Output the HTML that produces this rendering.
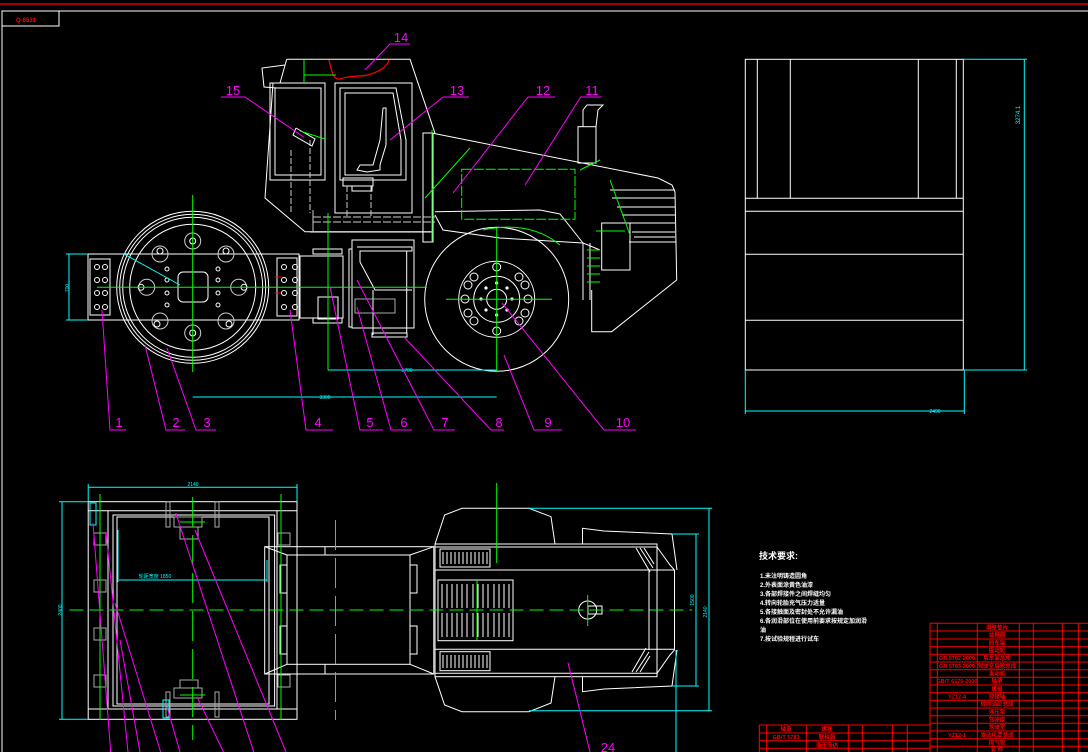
<!DOCTYPE html>
<html><head><meta charset="utf-8"><style>
html,body{margin:0;padding:0;background:#000;}
svg{display:block;}
text{font-family:"Liberation Sans","Noto Sans CJK SC",sans-serif;}
</style></head><body>
<svg width="1088" height="752" viewBox="0 0 1088 752" xmlns="http://www.w3.org/2000/svg">
<rect width="1088" height="752" fill="#000"/>
<!-- border -->
<line x1="0" y1="4" x2="1088" y2="4" stroke="#f00" stroke-width="1.2"/>
<line x1="2" y1="11" x2="1088" y2="11" stroke="#fff"/>
<line x1="2" y1="11" x2="2" y2="752" stroke="#fff"/>
<rect x="2" y="11" width="57" height="15" fill="none" stroke="#fff"/>
<text x="26" y="22" fill="#f00" font-size="6" text-anchor="middle" font-weight="bold">Q-8531</text>

<!-- ===== SIDE VIEW ===== -->
<g fill="none" stroke="#fff" stroke-width="1">
<!-- cab -->
<polyline points="286.7,59.3 410,59.3 435,133.3"/>
<polyline points="286.7,59.3 280,83 273,83 265,198 305,231.7 433,231.7"/>
<polyline points="285,65 262,68 264,87 277,88"/>
<rect x="270" y="83" width="55" height="97"/>
<rect x="275" y="88" width="46" height="87"/>
<rect x="335" y="83" width="77" height="130"/>
<polygon points="340,88 396,88 406,140 406,180 340,180"/>
<polygon points="345,93 393,93 401,140 401,175 345,175"/>
<polyline points="383,108 386,108 386,145 380,165 380,170 367,172 357,170 360,165 373,165 380,140 383,108"/>
<rect x="343" y="178" width="30" height="8"/>
<rect x="352" y="186" width="20" height="5"/>
<line x1="313" y1="217" x2="435" y2="217" stroke="#ccc" stroke-dasharray="8,2"/>
<line x1="313" y1="222" x2="435" y2="222" stroke="#ccc" stroke-dasharray="8,2"/>
<line x1="310" y1="232" x2="433" y2="232"/>
<line x1="313" y1="210" x2="313" y2="232" stroke="#ccc"/>
<line x1="291" y1="150" x2="291" y2="213" stroke="#ccc" stroke-dasharray="6,2"/>
<line x1="310" y1="140" x2="310" y2="213" stroke="#ccc" stroke-dasharray="6,2"/>
<line x1="347" y1="186" x2="347" y2="217" stroke="#ccc" stroke-dasharray="6,2"/>
<line x1="371" y1="186" x2="371" y2="217" stroke="#ccc" stroke-dasharray="6,2"/>
<polyline points="296,128 315,139 312,146 293,135 296,128"/>
<!-- post -->
<rect x="423" y="133" width="10" height="109"/>
<!-- hood -->
<polyline points="433,133.3 658,178 672,185 675,192 676.7,280 611.7,331.7 591.7,331.7 591.7,290"/>
<polyline points="435,211.7 540,210 560,214 583,243 600,250"/>
<polyline points="435,215 443,230 500,238 583,243"/>
<rect x="578" y="126.7" width="18" height="36.3"/>
<polyline points="583,126.7 583,110 587,105 603,105 598,110 596,126.7"/>
<rect x="601.7" y="223" width="28.3" height="47"/>
<line x1="610" y1="190" x2="675" y2="190"/>
<line x1="612" y1="198" x2="675" y2="198"/>
<line x1="617" y1="207" x2="675" y2="207"/>
<line x1="622" y1="215" x2="675" y2="215"/>
<line x1="626" y1="223" x2="675" y2="223"/>
<line x1="632" y1="232" x2="675" y2="232"/>
<line x1="634" y1="237" x2="675" y2="237"/>
<line x1="629" y1="242" x2="676" y2="242"/>
<line x1="583" y1="243" x2="583" y2="300"/>
<line x1="590" y1="243" x2="590" y2="300"/>
<!-- rear wheel -->
<circle cx="496.7" cy="299.3" r="72"/>
<circle cx="496.7" cy="299.3" r="38"/>
<circle cx="496.7" cy="299.3" r="23"/>
<circle cx="496.7" cy="299.3" r="10"/>
<!-- front drum -->
<circle cx="192.7" cy="287.3" r="76"/>
<circle cx="192.7" cy="287.3" r="73"/>
<circle cx="192.7" cy="287.3" r="70"/>
<circle cx="192.7" cy="287.3" r="63"/>
<rect x="88" y="254" width="211" height="66"/>
<rect x="178" y="272" width="30" height="30" rx="5"/>
<rect x="90" y="259" width="20" height="56"/>
<rect x="277" y="258" width="20" height="58"/>
<!-- middle frame -->
<rect x="300" y="256" width="43" height="62"/>
<rect x="313" y="249" width="29" height="5"/>
<rect x="313" y="318" width="29" height="5"/>
<rect x="349" y="249" width="3" height="78"/>
<rect x="352" y="240" width="62" height="88"/>
<polyline points="357,247 412,247 412,251 360,251 360,262 375,290 412,290"/>
<line x1="406.7" y1="251" x2="406.7" y2="333"/>
<line x1="373" y1="290" x2="373" y2="335"/>
<rect x="372" y="333" width="35" height="4"/>
<rect x="355" y="299" width="40" height="14" stroke="#aaa"/>
<rect x="318" y="297" width="20" height="22"/>
</g>
<!-- drum bolts -->
<g fill="none" stroke="#ccc">
<circle cx="192.7" cy="241" r="8"/><circle cx="192.7" cy="333" r="8"/>
<circle cx="146.7" cy="287.3" r="8"/><circle cx="238.7" cy="287.3" r="8"/>
<circle cx="160" cy="254" r="8"/><circle cx="226" cy="254" r="8"/>
<circle cx="160" cy="321" r="8"/><circle cx="226" cy="321" r="8"/>
</g>
<g fill="none" stroke="#fff">
<circle cx="192.7" cy="241" r="3"/><circle cx="192.7" cy="333" r="3"/>
<circle cx="141" cy="287.3" r="3"/><circle cx="244" cy="287.3" r="3"/>
<circle cx="160" cy="251" r="3"/><circle cx="226" cy="251" r="3"/>
<circle cx="157" cy="324" r="3"/><circle cx="229" cy="324" r="3"/>
<circle cx="167" cy="269" r="2"/><circle cx="167" cy="280" r="2"/><circle cx="167" cy="293" r="2"/><circle cx="167" cy="305" r="2"/>
<circle cx="218" cy="269" r="2"/><circle cx="218" cy="280" r="2"/><circle cx="218" cy="293" r="2"/><circle cx="218" cy="305" r="2"/>
<circle cx="97" cy="267" r="2.5"/><circle cx="105" cy="267" r="2.5"/><circle cx="97" cy="280" r="2.5"/><circle cx="105" cy="280" r="2.5"/>
<circle cx="97" cy="293" r="2.5"/><circle cx="105" cy="293" r="2.5"/><circle cx="97" cy="307" r="2.5"/><circle cx="105" cy="307" r="2.5"/>
<circle cx="284" cy="267" r="2.5"/><circle cx="295" cy="267" r="2.5"/><circle cx="284" cy="280" r="2.5"/><circle cx="295" cy="280" r="2.5"/>
<circle cx="284" cy="293" r="2.5"/><circle cx="295" cy="293" r="2.5"/><circle cx="284" cy="307" r="2.5"/><circle cx="295" cy="307" r="2.5"/>
</g>
<!-- wheel bolts -->
<g fill="none" stroke="#fff">
<circle cx="496.7" cy="267" r="4"/><circle cx="496.7" cy="331" r="4"/>
<circle cx="465" cy="299" r="4"/><circle cx="528" cy="299" r="4"/>
<circle cx="474" cy="277" r="4"/><circle cx="519" cy="277" r="4"/>
<circle cx="474" cy="321" r="4"/><circle cx="519" cy="321" r="4"/>
<circle cx="468" cy="285" r="4"/><circle cx="525" cy="285" r="4"/>
<circle cx="468" cy="313" r="4"/><circle cx="525" cy="313" r="4"/>
</g>
<g fill="#fff">
<circle cx="496.7" cy="283" r="1.6"/><circle cx="496.7" cy="315" r="1.6"/><circle cx="481" cy="299" r="1.6"/><circle cx="512" cy="299" r="1.6"/>
<circle cx="486" cy="288" r="1.6"/><circle cx="507" cy="288" r="1.6"/><circle cx="486" cy="310" r="1.6"/><circle cx="507" cy="310" r="1.6"/>
</g>
<!-- red details -->
<path d="M329,60 C332,72 333,80 340,79 C350,75 360,77 368,75 C378,72 387,67 389,60" fill="none" stroke="#f00" stroke-width="1.2"/>
<line x1="275" y1="277" x2="281" y2="277" stroke="#f00"/><line x1="275" y1="293" x2="281" y2="293" stroke="#f00"/>
<!-- green centerlines -->
<g stroke="#0f0" stroke-width="1" fill="none">
<line x1="192.7" y1="195" x2="192.7" y2="372"/>
<line x1="97" y1="287.3" x2="300" y2="287.3"/>
<line x1="496.7" y1="228" x2="496.7" y2="372"/>
<line x1="446" y1="299.3" x2="552" y2="299.3"/>
<line x1="328" y1="213" x2="328" y2="370"/>
<line x1="300" y1="287.3" x2="420" y2="287.3"/>
<line x1="420" y1="287.3" x2="427" y2="287.3"/>
<rect x="461.7" y="169.3" width="113.3" height="50" stroke-dasharray="10,2"/>
<line x1="304" y1="75" x2="336" y2="75"/>
<line x1="304" y1="60" x2="304" y2="83"/>
<path d="M483,230 Q530,220 560,245" />
<line x1="425" y1="198" x2="470" y2="148"/>
<line x1="432" y1="130" x2="432" y2="242"/>
<line x1="300" y1="131" x2="325" y2="139"/>
<line x1="596" y1="231" x2="625" y2="231"/>
<line x1="580" y1="170" x2="600" y2="160"/>
<line x1="610" y1="180" x2="630" y2="235"/>
<line x1="587" y1="250" x2="600" y2="250"/><line x1="587" y1="258" x2="600" y2="258"/><line x1="587" y1="266" x2="600" y2="266"/><line x1="587" y1="274" x2="600" y2="274"/><line x1="587" y1="282" x2="600" y2="282"/>
</g>
<!-- cyan dims side -->
<g stroke="#0ff" fill="none">
<line x1="69" y1="254" x2="69" y2="320"/>
<line x1="66" y1="254" x2="88" y2="254"/><line x1="66" y1="320" x2="88" y2="320"/>
<line x1="328" y1="370" x2="496.7" y2="370"/>
<line x1="192.7" y1="397" x2="496.7" y2="397"/>
<line x1="124" y1="254" x2="180" y2="285"/>
</g>
<text x="407" y="372" fill="#0ff" font-size="5" text-anchor="middle">1700</text>
<text x="325" y="399" fill="#0ff" font-size="5" text-anchor="middle">3300</text>
<text x="67" y="290" fill="#0ff" font-size="5" text-anchor="middle" transform="rotate(-90 67 288)">700</text>

<!-- magenta labels & leaders -->
<g stroke="#f0f" fill="none">
<polyline points="410,44 390,44 365,70"/>
<polyline points="469,97 443,97 390,140"/>
<polyline points="555,97 528,97 453,193"/>
<polyline points="601.7,97 580.7,97 525,185"/>
<polyline points="221,97 245,97 303.6,137" />
<polyline points="126,430 110,430 102,310"/>
<polyline points="185,430 166,430 145,345"/>
<polyline points="216,430 196,430 167,348"/>
<polyline points="333,430 306,430 290,310"/>
<polyline points="383,430 360,430 330,287"/>
<polyline points="412,430 391,430 357,307"/>
<polyline points="455,430 434,430 357,280"/>
<polyline points="504,430 491,430 404,337"/>
<polyline points="562,430 534,430 504,355"/>
<polyline points="636,430 604,430 502,303"/>
</g>
<g fill="#f0f" font-size="13" text-anchor="middle" font-family="Liberation Serif,serif">
<text x="401" y="42">14</text><text x="457" y="95">13</text><text x="543" y="95">12</text><text x="592" y="95">11</text><text x="233" y="95">15</text>
<text x="119" y="427">1</text><text x="176" y="427">2</text><text x="207" y="427">3</text><text x="318" y="427">4</text><text x="370" y="427">5</text>
<text x="404" y="427">6</text><text x="445" y="427">7</text><text x="499" y="427">8</text><text x="548" y="427">9</text><text x="623" y="427">10</text>
<text x="608" y="752">24</text>
</g>

<!-- ===== FRONT VIEW (right) ===== -->
<g fill="none" stroke="#fff">
<rect x="745.3" y="59.3" width="218" height="310.7"/>
<line x1="757.3" y1="59.3" x2="757.3" y2="198.3"/>
<line x1="790.3" y1="59.3" x2="790.3" y2="198.3"/>
<line x1="918.3" y1="59.3" x2="918.3" y2="198.3"/>
<line x1="956.3" y1="59.3" x2="956.3" y2="198.3"/>
<line x1="745.3" y1="198.3" x2="963.3" y2="198.3"/>
<line x1="745.3" y1="211.3" x2="963.3" y2="211.3"/>
<line x1="745.3" y1="254.3" x2="963.3" y2="254.3"/>
<line x1="745.3" y1="320.3" x2="963.3" y2="320.3"/>
</g>
<g stroke="#0ff" fill="none">
<line x1="963.3" y1="59.3" x2="1027" y2="59.3"/>
<line x1="963.3" y1="370" x2="1027" y2="370"/>
<line x1="1024.3" y1="59.3" x2="1024.3" y2="370"/>
<line x1="745.3" y1="370" x2="745.3" y2="414"/>
<line x1="964.3" y1="370" x2="964.3" y2="414"/>
<line x1="745.3" y1="411" x2="964.3" y2="411"/>
</g>
<text x="1020" y="115" fill="#0ff" font-size="6" text-anchor="middle" transform="rotate(-90 1020 115)">3274.1</text>
<text x="935" y="413" fill="#0ff" font-size="5" text-anchor="middle">2490</text>

<!-- ===== PLAN VIEW ===== -->
<g fill="none" stroke="#fff">
<rect x="88.2" y="501.7" width="208.8" height="217.6"/>
<line x1="88.2" y1="510.7" x2="297" y2="510.7"/>
<line x1="88.2" y1="709" x2="297" y2="709"/>
<line x1="108" y1="510.7" x2="108" y2="709"/>
<line x1="277" y1="510.7" x2="277" y2="709"/>
<rect x="113" y="515" width="161.6" height="191"/>
<rect x="117" y="517" width="152" height="187"/>
<rect x="264.7" y="546.7" width="169.1" height="127.3"/>
<rect x="287" y="555" width="123" height="109.3"/>
<line x1="264.7" y1="546.7" x2="287" y2="555"/><line x1="433.8" y1="546.7" x2="410" y2="555"/>
<line x1="264.7" y1="674" x2="287" y2="664.3"/><line x1="433.8" y1="674" x2="410" y2="664.3"/>
<rect x="280" y="565" width="7" height="28"/><rect x="280" y="626" width="7" height="28"/>
<rect x="410" y="565" width="7" height="28"/><rect x="410" y="626" width="7" height="28"/>
<line x1="325" y1="546.7" x2="325" y2="555"/><line x1="325" y1="664.3" x2="325" y2="674"/>
<rect x="435" y="544" width="222" height="132.7"/>
<line x1="435" y1="547" x2="657" y2="547"/>
<line x1="435" y1="570" x2="674.5" y2="570"/>
<line x1="435" y1="649.3" x2="674.5" y2="649.3"/>
<line x1="435" y1="673.3" x2="657" y2="673.3"/>
<line x1="674.5" y1="570" x2="674.5" y2="650"/>
<line x1="649" y1="570" x2="649" y2="650"/>
<polyline points="657,547 670,565 674.5,570"/><polyline points="657,673.3 670,655 674.5,650"/>
<polyline points="435,544 444.6,515 462,508.3 529,508.3 551,516.7 555,544"/>
<polyline points="435,676.7 444.6,705 462,711.7 529,711.7 551,703 555,676.7"/>
<polyline points="582.5,544 582.5,528.3 604,531 672,534 677,570"/>
<polyline points="582.5,676.7 582.5,691.7 604,689 672,686 677,650"/>
<rect x="440" y="549" width="50" height="18"/>
<rect x="440" y="651.7" width="50" height="19"/>
<rect x="438" y="580" width="75" height="60.7"/>
<circle cx="587.7" cy="610" r="9"/>
<rect x="588" y="606" width="14" height="8"/>
</g>
<!-- vent slats -->
<g stroke="#fff" fill="none">
<path d="M443,552v12M447,552v12M451,552v12M455,552v12M459,552v12M463,552v12M467,552v12M471,552v12M475,552v12M479,552v12M483,552v12M487,552v12"/>
<path d="M443,655v13M447,655v13M451,655v13M455,655v13M459,655v13M463,655v13M467,655v13M471,655v13M475,655v13M479,655v13M483,655v13M487,655v13"/>
<path d="M442,584v24M447,584v24M452,584v24M457,584v24M462,584v24M467,584v24M473,584v24M478,584v24M483,584v24M488,584v24M494,584v24M499,584v24M504,584v24M509,584v24"/>
<path d="M442,613v24M447,613v24M452,613v24M457,613v24M462,613v24M467,613v24M473,613v24M478,613v24M483,613v24M488,613v24M494,613v24M499,613v24M504,613v24M509,613v24"/>
<path d="M636,548l14,24M640,548l13,20M644,548l10,16M632,672l14,-24M636,672l13,-20M640,672l10,-16"/>
</g>
<!-- grey details plan -->
<g stroke="#aaa" fill="none">
<rect x="174" y="517" width="28" height="10"/><rect x="180" y="527" width="18" height="12"/>
<rect x="174" y="688" width="28" height="10"/><rect x="180" y="680" width="18" height="8"/>
<rect x="166" y="502" width="4" height="25"/><rect x="215" y="502" width="4" height="25"/>
<rect x="166" y="692" width="4" height="25"/><rect x="215" y="692" width="4" height="25"/>
<rect x="94" y="533" width="12" height="12"/><rect x="94" y="580" width="12" height="12"/>
<rect x="94" y="628" width="12" height="12"/><rect x="94" y="675" width="12" height="12"/>
<rect x="278" y="533" width="12" height="12"/><rect x="278" y="675" width="12" height="12"/>
</g>
<g stroke="#0f0" fill="none">
<line x1="69.5" y1="610" x2="692" y2="610" stroke-dasharray="14,6"/>
<line x1="192.7" y1="497" x2="192.7" y2="740" stroke-dasharray="30,8"/>
<line x1="335.5" y1="520" x2="335.5" y2="720" stroke-dasharray="30,8"/>
<line x1="496.7" y1="483" x2="496.7" y2="563"/>
<line x1="587.7" y1="595" x2="587.7" y2="626"/>
<line x1="100" y1="494" x2="100" y2="720"/>
<line x1="281" y1="494" x2="281" y2="720"/>
<line x1="180" y1="522" x2="205" y2="522"/><line x1="180" y1="695" x2="205" y2="695"/>
<line x1="477" y1="580" x2="477" y2="640"/>
</g>
<!-- cyan dims plan -->
<g stroke="#0ff" fill="none">
<line x1="88.2" y1="487.3" x2="297" y2="487.3"/>
<line x1="88.2" y1="484" x2="88.2" y2="501"/><line x1="297" y1="484" x2="297" y2="501"/>
<line x1="62" y1="501.7" x2="62" y2="719.3"/>
<line x1="59" y1="501.7" x2="88" y2="501.7"/><line x1="59" y1="719.3" x2="88" y2="719.3"/>
<line x1="119" y1="580" x2="267" y2="580"/>
<line x1="118" y1="530" x2="118" y2="582"/><line x1="267" y1="560" x2="267" y2="582"/>
<line x1="696" y1="534" x2="696" y2="686"/>
<line x1="672" y1="534" x2="699" y2="534"/><line x1="672" y1="686" x2="699" y2="686"/>
<line x1="709" y1="508.3" x2="709" y2="710.7"/>
<line x1="529" y1="508.3" x2="712" y2="508.3"/><line x1="529" y1="710.7" x2="712" y2="710.7"/>
<line x1="676" y1="650" x2="676" y2="752"/>
<rect x="90" y="503" width="6" height="22"/>
<rect x="163" y="700" width="6" height="18"/>
</g>
<g fill="#0ff" font-size="5" text-anchor="middle">
<text x="193" y="486">2140</text>
<text x="155" y="578">轮距宽度 1850</text>
<text x="60" y="612" transform="rotate(-90 60 610)">2400</text>
<text x="694" y="600" transform="rotate(-90 694 600)">1500</text>
<text x="707" y="612" transform="rotate(-90 707 612)">2140</text>
</g>
<g stroke="#f0f" fill="none">
<line x1="93" y1="523" x2="110.7" y2="752"/>
<line x1="106" y1="531.7" x2="128" y2="752"/>
<line x1="115" y1="603" x2="160.6" y2="752"/>
<line x1="175.8" y1="513" x2="253.8" y2="752"/>
<line x1="195" y1="530" x2="286" y2="752"/>
<line x1="167" y1="706.7" x2="180" y2="752"/>
<line x1="197" y1="696.7" x2="223.5" y2="752"/>
<line x1="120" y1="640" x2="140" y2="752"/>
<line x1="568" y1="662.7" x2="590" y2="752"/>
</g>

<!-- tech requirements -->
<g fill="#fff" font-family="Liberation Sans,'Noto Sans CJK SC',sans-serif" font-weight="bold">
<text x="759" y="559" font-size="9">技术要求:</text>
<g font-size="6">
<text x="760" y="578">1.未注明铸造圆角</text>
<text x="760" y="587">2.外表面涂黄色油漆</text>
<text x="760" y="596">3.各部焊接件之间焊缝均匀</text>
<text x="760" y="605">4.转向轮胎充气压力适量</text>
<text x="760" y="614">5.各接触面及密封处不允许漏油</text>
<text x="760" y="623">6.各润滑部位在使用前要求按规定加润滑</text>
<text x="760" y="632">油</text>
<text x="760" y="641">7.按试验规程进行试车</text>
</g></g>

<!-- title block -->
<g stroke="#f00" fill="none">
<path d="M930,623.3H1088M930,631H1088M930,639H1088M930,646.7H1088M930,654.3H1088M930,662H1088M930,669.7H1088M930,677.3H1088M930,685H1088M930,692.7H1088M930,700.3H1088M930,708H1088M930,715.7H1088M930,723.3H1088M930,731H1088M930,738.7H1088M930,746.3H1088"/>
<path d="M930,623.3V752M937.3,623.3V752M977.3,623.3V752M1019.3,623.3V752M1033.3,623.3V752M1062.3,623.3V752M1078.3,623.3V752"/>
<path d="M759.3,725H930M759.3,733H930M759.3,740.7H930M759.3,748.3H930"/>
<path d="M759.3,725V752M766.7,725V752M806.3,725V752M848.3,725V752M862.3,725V752M892.3,725V752M907.3,725V752"/>
</g>
<g fill="#f00" font-size="5.5" font-weight="bold" text-anchor="middle">
<text x="997" y="629.5">调整垫片</text><text x="997" y="637">减振器</text><text x="997" y="645">前车架</text>
<text x="997" y="652.5">振动轮</text><text x="997" y="660">后车架总成</text><text x="997" y="668">驾驶室后轮总成</text>
<text x="997" y="675.5">发动机</text><text x="997" y="683">轴承</text><text x="997" y="691">螺母</text>
<text x="997" y="698.5">铰接轴</text><text x="997" y="706">转向油缸总成</text><text x="997" y="714">液压泵</text>
<text x="997" y="721.5">驾驶座</text><text x="997" y="729">驾驶室</text><text x="997" y="737">发动机罩总成</text>
<text x="997" y="744.5">排气管</text><text x="997" y="751">名 称</text>
<text x="957" y="660">GB 5782-2000</text><text x="957" y="668">GB 5783-2000</text><text x="957" y="683">GB/T 6170-2000</text>
<text x="957" y="698.5">YZ12-4</text><text x="957" y="737">YZ12-1</text>
<text x="786" y="731">轴承</text><text x="786" y="739">GB/T 5783</text>
<text x="827" y="731">螺栓</text><text x="827" y="739">联轴器</text><text x="827" y="747">液压马达</text>
</g>
</svg>
</body></html>
